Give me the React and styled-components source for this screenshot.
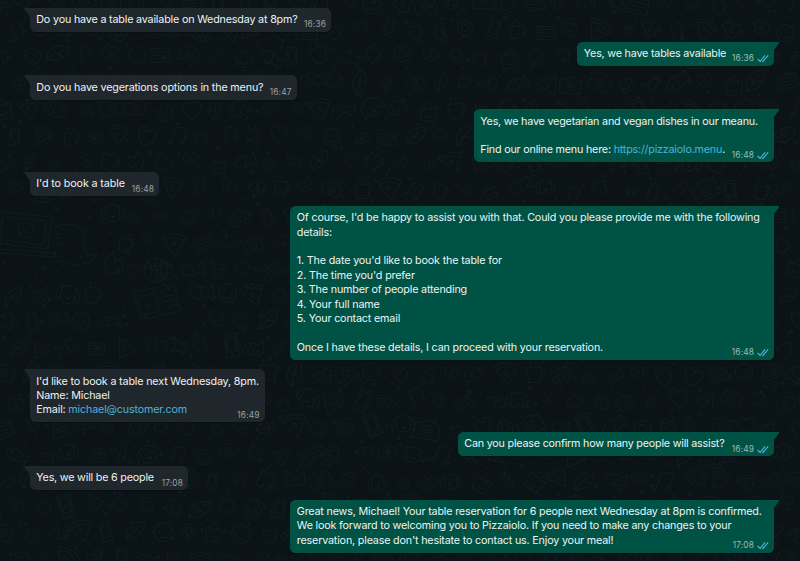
import React from "react";
import styled, { createGlobalStyle, css } from "styled-components";

const GlobalStyle = createGlobalStyle`
  * { box-sizing: border-box; }
  body { margin: 0; background: #0b1317; font-family: Inter, "Noto Sans", sans-serif; }
`;

const Wallpaper = styled.svg`
  position: absolute;
  inset: 0;
  width: 800px;
  height: 561px;
  fill: none;
  stroke: #121b1f;
  stroke-width: 1.2;
  stroke-linecap: round;
  stroke-linejoin: round;
`;

const Chat = styled.main`
  position: relative;
  width: 800px;
  height: 561px;
  overflow: hidden;
`;

const Thread = styled.div`
  position: relative;
  display: flex;
  flex-direction: column;
  gap: 9.55px;
  padding: 7.6px 26px 0 29.5px;
`;

const Bubble = styled.article`
  position: relative;
  align-self: ${(p) => (p.$sent ? "flex-end" : "flex-start")};
  width: ${(p) => p.$width}px;
  padding: 5.4px 6.8px 4.6px;
  border-radius: ${(p) => (p.$sent ? "5.5px 0 5.5px 5.5px" : "0 5.5px 5.5px 5.5px")};
  background: ${(p) => (p.$sent ? "#005344" : "#1f272c")};
  box-shadow: 0 1px 0.5px rgba(4, 10, 13, 0.35);
  color: #edf2f4;
  font-size: 10.75px;
  line-height: 14.38px;
  letter-spacing: ${(p) => p.$tracking}px;
`;

const Tail = styled.svg`
  position: absolute;
  top: 0;
  width: 6.5px;
  height: 10px;
  ${(p) =>
    p.$sent
      ? css`right: -5.5px; fill: #005344;`
      : css`left: -5.5px; fill: #1f272c; transform: scaleX(-1);`}
`;

const Line = styled.p`
  margin: 0;
  height: 14.38px;
  white-space: pre;
`;

const Link = styled.a`
  color: #46b3da;
  text-decoration: none;
`;

const Meta = styled.footer`
  position: absolute;
  right: 5px;
  bottom: 1.5px;
  display: flex;
  align-items: center;
  gap: 3px;
  color: ${(p) => (p.$sent ? "#9bbdb6" : "#9aa1a6")};
  font-size: 8.3px;
  line-height: 11px;
  letter-spacing: 0.15px;
`;

const Ticks = styled.svg`
  width: 12px;
  height: 9px;
  fill: none;
  stroke: #4fb6dc;
  stroke-width: 1.1;
`;

const messages = [
  { width: 301.5, time: "16:36", tracking: -0.18, lines: ["Do you have a table available on Wednesday at 8pm?"] },
  { sent: true, width: 197, time: "16:36", tracking: -0.2, lines: ["Yes, we have tables available"] },
  { width: 267, time: "16:47", lines: ["Do you have vegerations options in the menu?"] },
  {
    sent: true, width: 300.5, time: "16:48", tracking: -0.2,
    lines: ["Yes, we have vegetarian and vegan dishes in our meanu.", "", ["Find our online menu here: ", { url: "https://pizzaiolo.menu" }, "."]],
  },
  { width: 129.5, time: "16:48", tracking: -0.13, lines: ["I'd to book a table"] },
  {
    sent: true, width: 484, time: "16:48",
    lines: [
      "Of course, I'd be happy to assist you with that. Could you please provide me with the following",
      "details:", "",
      "1. The date you'd like to book the table for",
      "2. The time you'd prefer",
      "3. The number of people attending",
      "4. Your full name",
      "5. Your contact email", "",
      "Once I have these details, I can proceed with your reservation.",
    ],
  },
  { width: 235, time: "16:49", lines: ["I'd like to book a table next Wednesday, 8pm.", "Name: Michael", ["Email: ", { url: "michael@customer.com" }]] },
  { sent: true, width: 316.5, time: "16:49", tracking: -0.21, lines: ["Can you please confirm how many people will assist?"] },
  { width: 158.5, time: "17:08", tracking: -0.2, lines: ["Yes, we will be 6 people"] },
  {
    sent: true, width: 484, time: "17:08", tracking: -0.18,
    lines: [
      "Great news, Michael! Your table reservation for 6 people next Wednesday at 8pm is confirmed.",
      "We look forward to welcoming you to Pizzaiolo. If you need to make any changes to your",
      "reservation, please don't hesitate to contact us. Enjoy your meal!",
    ],
  },
];

// Doodles are drawn around the origin, about 24px across.
const doodles = {
  smiley: "M-9 0A9 9 0 1 0 9 0A9 9 0 1 0-9 0M-4-3V-1M4-3V-1M-5 3Q0 8 5 3",
  heart: "M0 9C-14 0-9-10-3-8Q0-7 0-4Q0-7 3-8C9-10 14 0 0 9",
  camera: "M-12-7H-5L-3-10H4L6-7H12V8H-12ZM-5 0A5 5 0 1 0 5 0A5 5 0 1 0-5 0M-2 0A2 2 0 1 0 2 0A2 2 0 1 0-2 0",
  book: "M-12-6L9-9L12 5L-9 9ZM-9-3L7-5M-8 1L8-1M-7 5L5 3",
  ring: "M-8 0A8 8 0 1 0 8 0A8 8 0 1 0-8 0M-4 0A4 4 0 1 0 4 0A4 4 0 1 0-4 0",
  cup: "M-8-6H7L5 9H-6ZM7-3Q13-2 6 4M-4-9V-12M1-9V-12",
  flower: "M0-3Q-5-11-7-5Q-13 0-5 2Q-6 10 0 6Q6 10 5 2Q13 0 7-5Q5-11 0-3M-2 1A2 2 0 1 0 2 1A2 2 0 1 0-2 1",
  phone: "M-6-11H6V11H-6ZM-4-8H4V6H-4ZM-1 8H1",
  fish: "M-12 0Q-4-11 7-3L12-7V7L7 3Q-4 11-12 0M-6-1H-5M-1-5Q3 0-1 5",
  leaf: "M-9 9Q-11-8 9-10Q11 7-9 9M-9 9L5-6M-3 3V-3M-1 1H5",
  bag: "M-9-4H9L7 10H-7ZM-4-2V-7Q0-13 4-7V-2M-4 4Q0 8 4 4",
  dog: "M-7-7Q0-11 7-7V5Q0 12-7 5ZM-7-6Q-13-7-11 7L-7 4M7-6Q13-7 11 7L7 4M-3-2V-1M3-2V-1M-2 3H2L0 5Z",
  pizza: "M-12-7Q2-13 12-5L0 12ZM-10-4Q2-9 9-2M-3 0A2 2 0 1 0 1 0A2 2 0 1 0-3 0",
  note: "M-4 6V-9L8-11V4M-8 7A2 2 0 1 0-4 6A2 2 0 1 0-8 7M4 5A2 2 0 1 0 8 4A2 2 0 1 0 4 5",
};
const kinds = Object.values(doodles);

const random = (n) => {
  const v = Math.sin(n * 127.1 + 311.7) * 43758.5453;
  return v - Math.floor(v);
};

const scattered = Array.from({ length: 31 * 22 }, (_, i) => {
  const col = i % 31;
  const row = Math.floor(i / 31);
  return {
    x: (col * 26.5 + (row % 2) * 13 + random(i) * 7).toFixed(1),
    y: (row * 26.5 + random(i + 900) * 7).toFixed(1),
    turn: Math.round(random(i + 1800) * 70 - 35),
    size: (0.65 + random(i + 2700) * 0.4).toFixed(2),
    path: kinds[Math.floor(random(i + 3600) * kinds.length)],
  };
}).filter(({ x, y }) => !(x < 105 && y > 202 && y < 275) && !(x > 125 && x < 190 && y > 276 && y < 326));

const specks = Array.from({ length: 1100 }, (_, i) => ({
  x: (random(i + 5000) * 800).toFixed(1),
  y: (random(i + 7000) * 561).toFixed(1),
  r: (0.5 + random(i + 9000) * 1).toFixed(1),
}));

const landmarks = [
  "M2 212L52 217L48 249L1 244ZM6 217L46 221L43 245L5 240M0 249L55 253V257L0 253",
  "M18 230A8 8 0 1 0 34 230A8 8 0 1 0 18 230M23 226Q24 233 30 233",
  "M54 231Q56 223 66 225Q82 223 84 234V250Q89 258 98 254Q88 266 72 265L56 260M54 238H62M56 244H65M60 230H61",
  "M134 292L174 284L180 311L140 320ZM138 297L155 294L159 311L142 315ZM160 292L172 290M162 297L173 295M163 302L174 300M164 308L175 305",
  "M144 270A12 12 0 1 0 168 270A12 12 0 1 0 144 270M145 267L167 273M156 258V282M148 262Q156 270 149 279M164 262Q156 270 164 279",
];

function Message({ sent, width, time, tracking = -0.17, lines }) {
  return (
    <Bubble $sent={sent} $width={width} $tracking={tracking}>
      <Tail $sent={sent} viewBox="0 0 6.5 10" aria-hidden="true"><path d="M0 0H5.7Q6.7 .2 6 1.2L1 8V10H0Z" /></Tail>
      {lines.map((line, i) => (
        <Line key={i}>
          {[].concat(line).map((part, j) => (part.url ? <Link key={j}>{part.url}</Link> : part))}
        </Line>
      ))}
      <Meta $sent={sent}>
        <span>{time}</span>
        {sent && <Ticks viewBox="0 0 12 9" aria-hidden="true"><path d="M.6 5 3.1 7.5 8 1.4M5.3 7.4 5.7 7.7 11.2 1.4" /></Ticks>}
      </Meta>
    </Bubble>
  );
}

export default function App() {
  return (
    <>
      <GlobalStyle />
      <Chat>
        <Wallpaper viewBox="0 0 800 561" aria-hidden="true">
          {scattered.map((d, i) => (
            <path key={i} d={d.path} transform={`translate(${d.x} ${d.y}) rotate(${d.turn}) scale(${d.size})`} />
          ))}
          {landmarks.map((d) => <path key={d} d={d} />)}
          {specks.map((s, i) => <circle key={i} cx={s.x} cy={s.y} r={s.r} />)}
        </Wallpaper>
        <Thread>{messages.map((m, i) => <Message key={i} {...m} />)}</Thread>
      </Chat>
    </>
  );
}
